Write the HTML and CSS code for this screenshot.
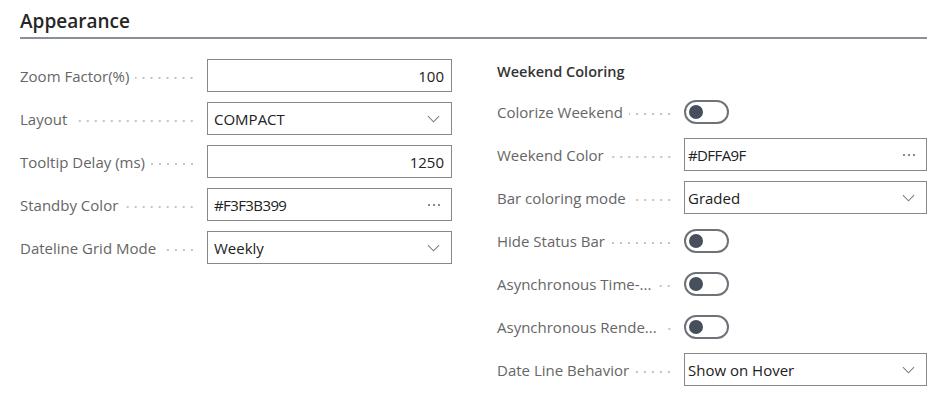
FILE: index.html
```html
<!DOCTYPE html>
<html>
<head>
<meta charset="utf-8">
<link rel="stylesheet" href="styles.css">
</head>
<body>
<div class="page">
  <h2 class="section-title">Appearance</h2>
  <div class="columns">
    <div class="col">
      <div class="row">
        <div class="label"><span class="text">Zoom Factor(%)</span><span class="dots"></span></div>
        <div class="field num">100</div>
      </div>
      <div class="row">
        <div class="label"><span class="text">Layout</span><span class="dots"></span></div>
        <div class="field select"><span class="val">COMPACT</span><svg class="chev" viewBox="0 0 14 8"><path d="M1 1 L7 7 L13 1" /></svg></div>
      </div>
      <div class="row">
        <div class="label"><span class="text">Tooltip Delay (ms)</span><span class="dots"></span></div>
        <div class="field num">1250</div>
      </div>
      <div class="row">
        <div class="label"><span class="text">Standby Color</span><span class="dots"></span></div>
        <div class="field select"><span class="val hex">#F3F3B399</span><svg class="more" viewBox="0 0 14 4"><circle cx="2" cy="2" r="1.1"/><circle cx="7" cy="2" r="1.1"/><circle cx="12" cy="2" r="1.1"/></svg></div>
      </div>
      <div class="row">
        <div class="label"><span class="text">Dateline Grid Mode</span><span class="dots"></span></div>
        <div class="field select"><span class="val">Weekly</span><svg class="chev" viewBox="0 0 14 8"><path d="M1 1 L7 7 L13 1" /></svg></div>
      </div>
    </div>
    <div class="col right">
      <div class="group-title">Weekend Coloring</div>
      <div class="row">
        <div class="label"><span class="text">Colorize Weekend</span><span class="dots"></span></div>
        <div class="toggle"><span class="knob"></span></div>
      </div>
      <div class="row">
        <div class="label"><span class="text">Weekend Color</span><span class="dots"></span></div>
        <div class="field select"><span class="val hex">#DFFA9F</span><svg class="more" viewBox="0 0 14 4"><circle cx="2" cy="2" r="1.1"/><circle cx="7" cy="2" r="1.1"/><circle cx="12" cy="2" r="1.1"/></svg></div>
      </div>
      <div class="row">
        <div class="label"><span class="text">Bar coloring mode</span><span class="dots"></span></div>
        <div class="field select"><span class="val">Graded</span><svg class="chev" viewBox="0 0 14 8"><path d="M1 1 L7 7 L13 1" /></svg></div>
      </div>
      <div class="row">
        <div class="label"><span class="text">Hide Status Bar</span><span class="dots"></span></div>
        <div class="toggle"><span class="knob"></span></div>
      </div>
      <div class="row">
        <div class="label"><span class="text">Asynchronous Time-...</span><span class="dots"></span></div>
        <div class="toggle"><span class="knob"></span></div>
      </div>
      <div class="row">
        <div class="label"><span class="text">Asynchronous Rende...</span><span class="dots"></span></div>
        <div class="toggle"><span class="knob"></span></div>
      </div>
      <div class="row">
        <div class="label"><span class="text">Date Line Behavior</span><span class="dots"></span></div>
        <div class="field select"><span class="val">Show on Hover</span><svg class="chev" viewBox="0 0 14 8"><path d="M1 1 L7 7 L13 1" /></svg></div>
      </div>
    </div>
  </div>
</div>
</body>
</html>
```

FILE: styles.css
```css
* { box-sizing: border-box; }
html, body { margin: 0; padding: 0; background: #ffffff; }
body {
  font-family: "Open Sans", "Noto Sans", "Liberation Sans", sans-serif;
  color: #212121;
}
.page {
  width: 927px;
  padding-left: 20px;
}
.section-title {
  margin: 0;
  padding-top: 6px;
  height: 39px;
  font-size: 19px;
  font-weight: 600;
  line-height: 30px;
  color: #262626;
  border-bottom: 2px solid #8a9099;
}
.columns {
  display: grid;
  grid-template-columns: 432px 430px;
  column-gap: 45px;
  padding-top: 20px;
}
.col {
  display: flex;
  flex-direction: column;
  gap: 10px;
}
.group-title {
  height: 26px;
  line-height: 26px;
  font-size: 14.5px;
  font-weight: 600;
  color: #333333;
}
.row {
  display: flex;
  align-items: center;
  height: 33px;
}
.label {
  width: 187px;
  flex: none;
  display: flex;
  align-items: center;
  padding-right: 11px;
  font-size: 15px;
  color: #666666;
  white-space: nowrap;
}
.label .text { flex: none; }
.dots {
  flex: 1;
  height: 2px;
  margin-left: 6px;
  margin-top: 5px;
  background-image: radial-gradient(circle, #c4c4c4 0.75px, transparent 1px);
  background-size: 8px 2px;
  background-position: right center;
  background-repeat: repeat-x;
}
.field {
  flex: 1;
  height: 33px;
  border: 1px solid #8a8886;
  display: flex;
  align-items: center;
  padding: 0 7px 0 6px;
  font-size: 15px;
  color: #212121;
}
.right .field { padding-left: 3px; }
.field.num { justify-content: flex-end; }
.field.select { justify-content: space-between; }
.hex { letter-spacing: -0.6px; }
.chev {
  width: 13px;
  height: 8px;
  margin-right: 4px;
  fill: none;
  stroke: #7a7a7a;
  stroke-width: 1.1;
}
.more {
  width: 14px;
  height: 4px;
  margin-right: 3px;
  fill: #6e6e6e;
}
.toggle {
  width: 45px;
  height: 24px;
  border: 2px solid #6e737a;
  border-radius: 12px;
  display: flex;
  align-items: center;
  padding-left: 3px;
}
.knob {
  width: 14px;
  height: 14px;
  border-radius: 50%;
  background: #474f5c;
}
```
